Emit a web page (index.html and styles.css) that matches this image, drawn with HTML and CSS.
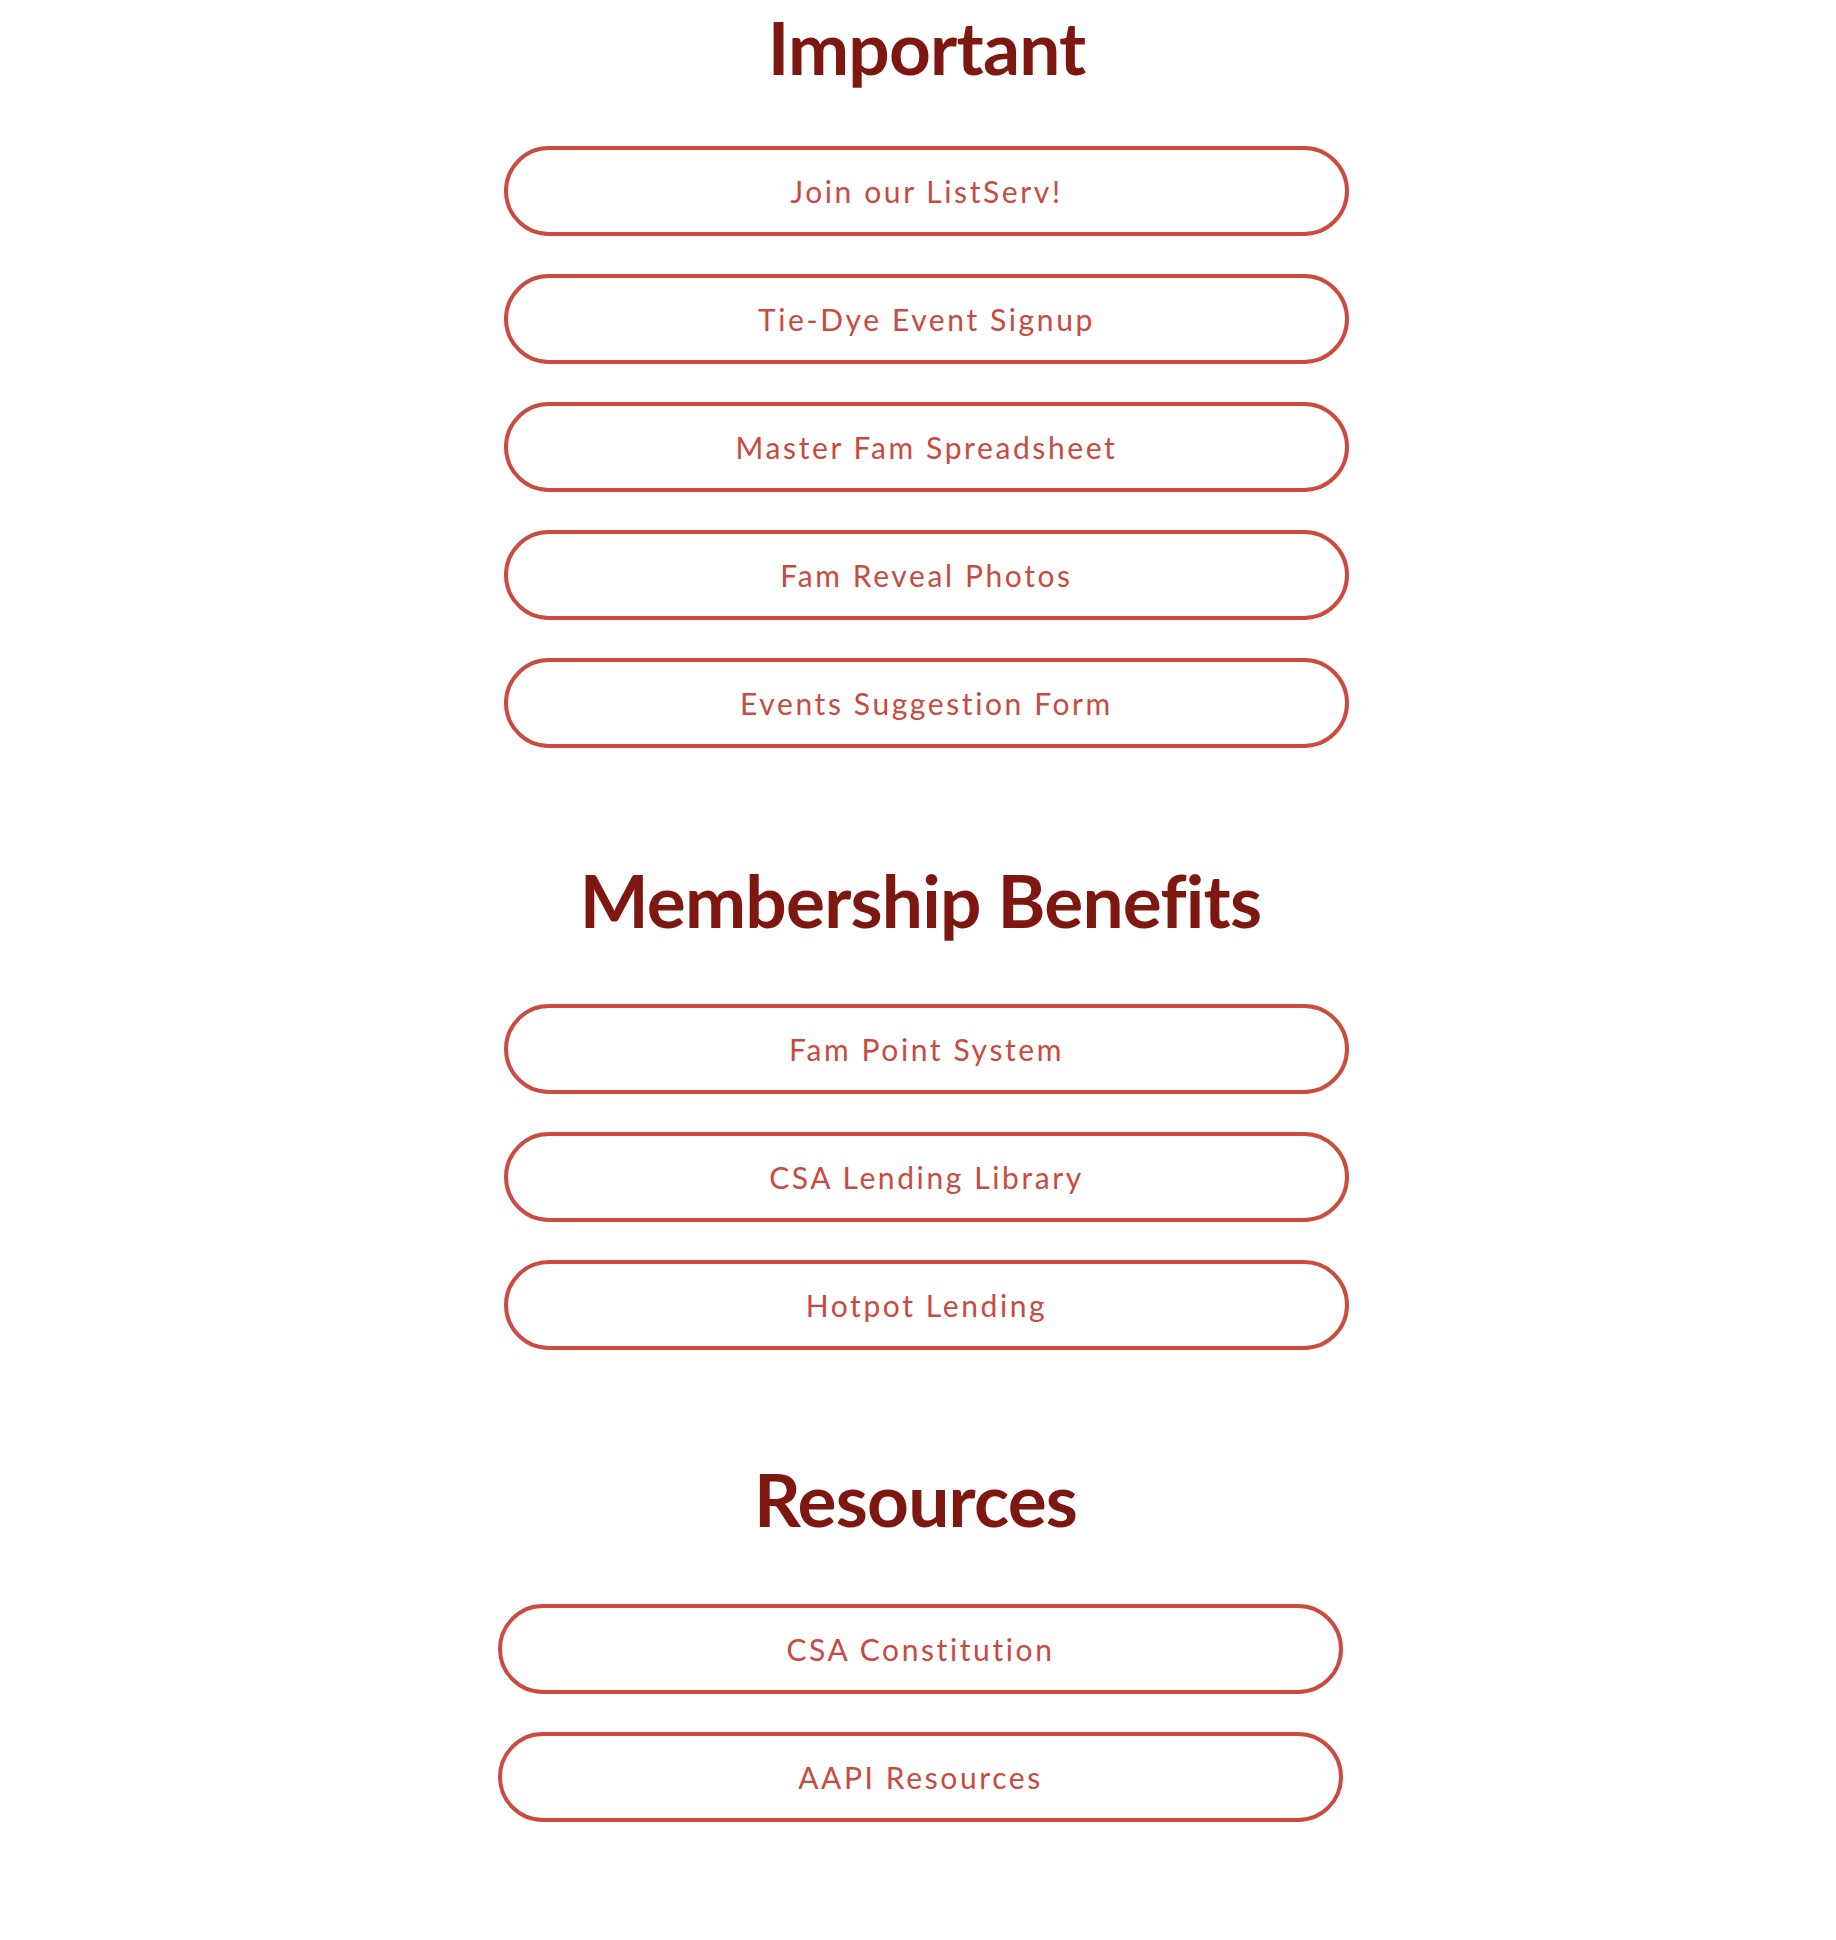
FILE: index.html
```html
<!DOCTYPE html>
<html lang="en">
<head>
<meta charset="utf-8">
<title>Links</title>
<link rel="stylesheet" href="styles.css">
</head>
<body>
<main class="page">
  <section class="group group-important">
    <h2 class="title">Important</h2>
    <div class="links">
      <a class="pill" href="#">Join our ListServ!</a>
      <a class="pill" href="#">Tie-Dye Event Signup</a>
      <a class="pill" href="#">Master Fam Spreadsheet</a>
      <a class="pill" href="#">Fam Reveal Photos</a>
      <a class="pill" href="#">Events Suggestion Form</a>
    </div>
  </section>
  <section class="group group-membership">
    <h2 class="title">Membership Benefits</h2>
    <div class="links">
      <a class="pill" href="#">Fam Point System</a>
      <a class="pill" href="#">CSA Lending Library</a>
      <a class="pill" href="#">Hotpot Lending</a>
    </div>
  </section>
  <section class="group group-resources">
    <h2 class="title">Resources</h2>
    <div class="links">
      <a class="pill" href="#">CSA Constitution</a>
      <a class="pill" href="#">AAPI Resources</a>
    </div>
  </section>
</main>
</body>
</html>
```
FILE: styles.css
```css
html, body {
  margin: 0;
  padding: 0;
  background: #ffffff;
}

body {
  font-family: Lato, "Noto Sans", sans-serif;
  min-height: 1940px;
}

.page {
  width: 845px;
  margin-left: 504px;
  padding-bottom: 100px;
}

.group {
  display: flex;
  flex-direction: column;
}

.title {
  margin: 0;
  font-family: Lato, "Noto Sans", sans-serif;
  font-weight: 700;
  font-size: 73px;
  letter-spacing: -0.8px;
  line-height: 88px;
  color: #7d1710;
  text-align: center;
}

.links {
  display: flex;
  flex-direction: column;
  gap: 38px;
}

.pill {
  box-sizing: border-box;
  height: 90px;
  border: 4px solid #cc4b40;
  border-radius: 45px;
  display: flex;
  align-items: center;
  justify-content: center;
  font-family: Lato, "Noto Sans", sans-serif;
  font-size: 30px;
  letter-spacing: 2.6px;
  color: #c94a40;
  text-decoration: none;
  background: #ffffff;
}

.group-important {
  margin-top: 3px;
}
.group-important .title {
  margin-bottom: 55px;
}

.group-membership {
  margin-top: 108px;
}
.group-membership .title {
  margin-bottom: 60px;
  padding-right: 12px;
}

.group-resources {
  margin: 105px 6px 0 -6px;
}
.group-resources .title {
  margin-bottom: 61px;
  padding-right: 10px;
}
```
